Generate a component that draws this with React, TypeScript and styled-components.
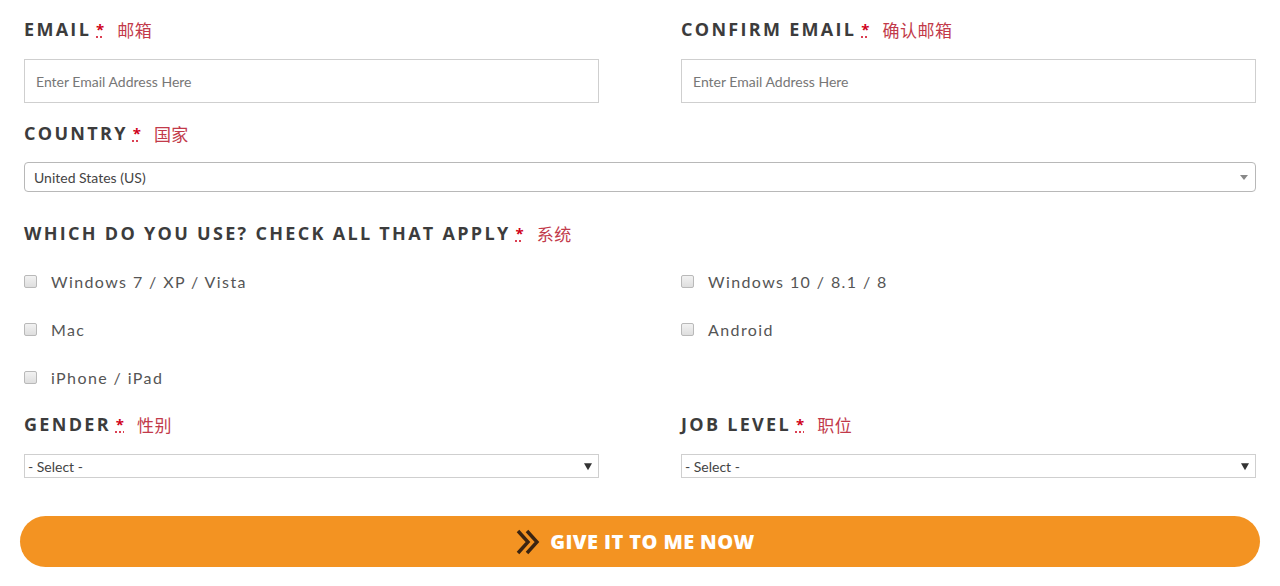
import styled, { createGlobalStyle } from "styled-components";

const GlobalStyle = createGlobalStyle`
  body {
    margin: 0;
    background: #ffffff;
    font-family: Lato, "Open Sans", sans-serif;
  }
`;

const Form = styled.form`
  padding: 18px 24px 0;
`;

const Row = styled.div<{ $top?: number }>`
  display: grid;
  grid-template-columns: 1fr 1fr;
  column-gap: 82px;
  margin-top: ${(p) => p.$top ?? 0}px;
`;

const Field = styled.div<{ $top?: number }>`
  display: flex;
  flex-direction: column;
  margin-top: ${(p) => p.$top ?? 0}px;
`;

const Label = styled.label`
  display: flex;
  align-items: center;
  height: 22px;
  font-family: "Open Sans", sans-serif;
  font-weight: 700;
  font-size: 18px;
  letter-spacing: 2.3px;
  color: #3c3c3c;
  text-transform: uppercase;
  white-space: nowrap;
`;

const Required = styled.abbr`
  color: #d0021b;
  font-size: 15px;
  text-decoration: underline dotted;
  text-underline-offset: 2px;
  margin-left: 5px;
  letter-spacing: 0;
`;

const Cn = styled.span`
  font-family: "Noto Sans CJK SC", sans-serif;
  font-weight: 400;
  color: #c23a4a;
  font-size: 17px;
  letter-spacing: 0.5px;
  margin-left: 13px;
`;

const TextInput = styled.input`
  box-sizing: border-box;
  height: 44px;
  margin-top: 19px;
  padding: 0 11px;
  border: 1px solid #cfcfcf;
  font-family: Lato, sans-serif;
  font-size: 14px;
  color: #333;
  outline: none;
  &::placeholder {
    color: #777;
  }
`;

const SelectWrap = styled.div<{ $round?: boolean }>`
  position: relative;
  margin-top: ${(p) => (p.$round ? 18 : 19)}px;
  &::after {
    content: "";
    position: absolute;
    right: ${(p) => (p.$round ? 8 : 7)}px;
    top: 50%;
    transform: translateY(-40%);
    border-left: 4px solid transparent;
    border-right: 4px solid transparent;
    border-top: ${(p) => (p.$round ? 5 : 7)}px solid ${(p) => (p.$round ? "#888" : "#333")};
    pointer-events: none;
  }
`;

const Select = styled.select<{ $round?: boolean }>`
  appearance: none;
  box-sizing: border-box;
  width: 100%;
  height: ${(p) => (p.$round ? 30 : 24)}px;
  padding: 0 ${(p) => (p.$round ? 9 : 3)}px;
  border: 1px solid ${(p) => (p.$round ? "#b8b8b8" : "#cfcfcf")};
  border-radius: ${(p) => (p.$round ? 4 : 0)}px;
  background: #fff;
  font-family: Lato, sans-serif;
  font-size: 14px;
  color: #444;
  outline: none;
`;

const CheckGrid = styled.div`
  display: grid;
  grid-template-columns: 1fr 1fr;
  column-gap: 82px;
  margin-top: 13px;
`;

const CheckItem = styled.label`
  display: flex;
  align-items: center;
  height: 48px;
  font-family: Lato, sans-serif;
  font-size: 16px;
  letter-spacing: 1.4px;
  color: #555;
`;

const Box = styled.input`
  appearance: none;
  box-sizing: border-box;
  width: 13px;
  height: 13px;
  margin: 0 14px 0 0;
  border: 1px solid #b9b9b9;
  border-radius: 2px;
  background: linear-gradient(#f2f2f2, #dedede);
`;

const Submit = styled.button`
  display: flex;
  align-items: center;
  justify-content: center;
  gap: 9px;
  box-sizing: border-box;
  width: calc(100% + 8px);
  height: 51px;
  margin: 38px -4px 0;
  padding: 0 10px 0 0;
  border: none;
  border-radius: 26px;
  background: #f39322;
  color: #fff;
  font-family: "Open Sans", sans-serif;
  font-weight: 800;
  font-size: 20px;
  letter-spacing: 0.4px;
  cursor: pointer;
`;

const Chevrons = () => (
  <svg width="26" height="28" viewBox="0 0 26 28" fill="none">
    <polyline points="3,3 13,14 3,25" stroke="#3a2412" strokeWidth="3.4" />
    <polyline points="12,3 22,14 12,25" stroke="#3a2412" strokeWidth="3.4" />
  </svg>
);

const FieldLabel = ({ text, cn }: { text: string; cn: string }) => (
  <Label>
    {text}
    <Required title="required">*</Required>
    <Cn>{cn}</Cn>
  </Label>
);

const systems = [
  "Windows 7 / XP / Vista",
  "Windows 10 / 8.1 / 8",
  "Mac",
  "Android",
  "iPhone / iPad",
];

export default function App() {
  return (
    <>
      <GlobalStyle />
      <Form onSubmit={(e) => e.preventDefault()}>
        <Row>
          <Field>
            <FieldLabel text="Email" cn="邮箱" />
            <TextInput type="email" placeholder="Enter Email Address Here" />
          </Field>
          <Field>
            <FieldLabel text="Confirm Email" cn="确认邮箱" />
            <TextInput type="email" placeholder="Enter Email Address Here" />
          </Field>
        </Row>

        <Field $top={19}>
          <FieldLabel text="Country" cn="国家" />
          <SelectWrap $round>
            <Select $round defaultValue="US">
              <option value="US">United States (US)</option>
            </Select>
          </SelectWrap>
        </Field>

        <Field $top={30}>
          <FieldLabel text="Which do you use? Check all that apply" cn="系统" />
          <CheckGrid>
            {systems.map((s) => (
              <CheckItem key={s}>
                <Box type="checkbox" />
                {s}
              </CheckItem>
            ))}
          </CheckGrid>
        </Field>

        <Row $top={12}>
          <Field>
            <FieldLabel text="Gender" cn="性别" />
            <SelectWrap>
              <Select defaultValue="">
                <option value="">- Select -</option>
              </Select>
            </SelectWrap>
          </Field>
          <Field>
            <FieldLabel text="Job Level" cn="职位" />
            <SelectWrap>
              <Select defaultValue="">
                <option value="">- Select -</option>
              </Select>
            </SelectWrap>
          </Field>
        </Row>

        <Submit type="submit">
          <Chevrons />
          GIVE IT TO ME NOW
        </Submit>
      </Form>
    </>
  );
}
